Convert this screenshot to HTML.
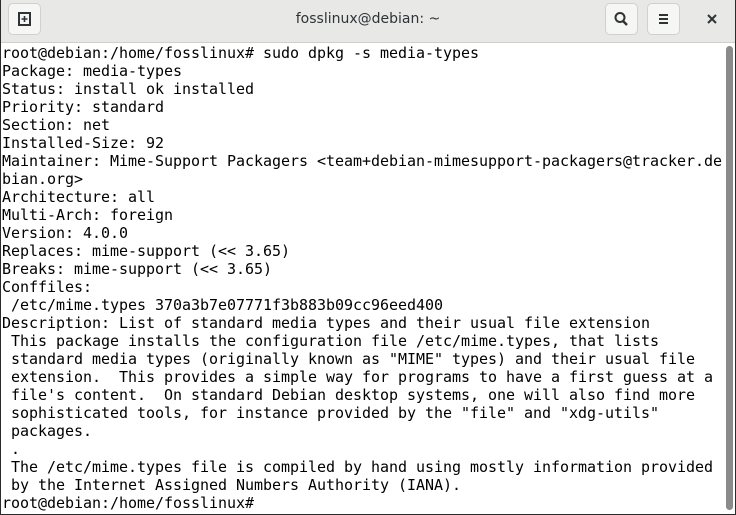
<!DOCTYPE html>
<html><head><style>
body{margin:0;width:736px;height:515px;overflow:hidden;background:#2b2b2b;}
.win{position:absolute;left:1px;top:0;width:734px;height:514px;background:#fff;}
.tb{position:absolute;left:0;top:0;width:734px;height:42px;background:#e8e8e7;border-bottom:1px solid #cfcfcd;}
.btn{position:absolute;top:3px;width:33px;height:32px;background:#f6f6f5;border:1px solid #d0d0ce;border-radius:5px;box-sizing:border-box;}
.title{position:absolute;left:0;right:0;top:11px;text-align:center;font:14px "DejaVu Sans","Liberation Sans",sans-serif;color:#2e3436;}
pre{position:absolute;left:1px;top:44px;margin:0;font:15px/18px "DejaVu Sans Mono","Liberation Mono",monospace;color:#000;letter-spacing:-0.03px;}
.sb{position:absolute;left:725px;top:46px;width:7px;height:464px;background:#8a8a8a;border-radius:4px;}
</style></head><body><div class="win">
<div class="tb">
<div class="btn" style="left:7px"><svg width="33" height="32" style="position:absolute;left:-1px;top:-1px"><rect x="11" y="10" width="11" height="12" fill="none" stroke="#2e3436" stroke-width="2"/><path d="M10 22h13M16.5 13v6M13.5 16h6" stroke="#2e3436" stroke-width="1.6"/></svg></div>
<div class="title">fosslinux@debian: ~</div>
<div class="btn" style="left:604px"><svg width="33" height="32" style="position:absolute;left:-1px;top:-1px"><circle cx="15" cy="14.5" r="4.5" fill="none" stroke="#2e3436" stroke-width="2"/><path d="M18 18l4 4" stroke="#2e3436" stroke-width="2.4"/></svg></div>
<div class="btn" style="left:646px"><svg width="33" height="32" style="position:absolute;left:-1px;top:-1px"><path d="M12 12h9M12 16h9M12 20h9" stroke="#2e3436" stroke-width="2"/></svg></div>
<svg width="12" height="12" style="position:absolute;left:705px;top:13px"><path d="M2 2l8 8M10 2l-8 8" stroke="#2e3436" stroke-width="2"/></svg>
</div>
<pre>root@debian:/home/fosslinux# sudo dpkg -s media-types
Package: media-types
Status: install ok installed
Priority: standard
Section: net
Installed-Size: 92
Maintainer: Mime-Support Packagers &lt;team+debian-mimesupport-packagers@tracker.de
bian.org&gt;
Architecture: all
Multi-Arch: foreign
Version: 4.0.0
Replaces: mime-support (&lt;&lt; 3.65)
Breaks: mime-support (&lt;&lt; 3.65)
Conffiles:
 /etc/mime.types 370a3b7e07771f3b883b09cc96eed400
Description: List of standard media types and their usual file extension
 This package installs the configuration file /etc/mime.types, that lists
 standard media types (originally known as "MIME" types) and their usual file
 extension.  This provides a simple way for programs to have a first guess at a
 file's content.  On standard Debian desktop systems, one will also find more
 sophisticated tools, for instance provided by the "file" and "xdg-utils"
 packages.
 .
 The /etc/mime.types file is compiled by hand using mostly information provided
 by the Internet Assigned Numbers Authority (IANA).
root@debian:/home/fosslinux#</pre>
<div class="sb"></div>
</div></body></html>
